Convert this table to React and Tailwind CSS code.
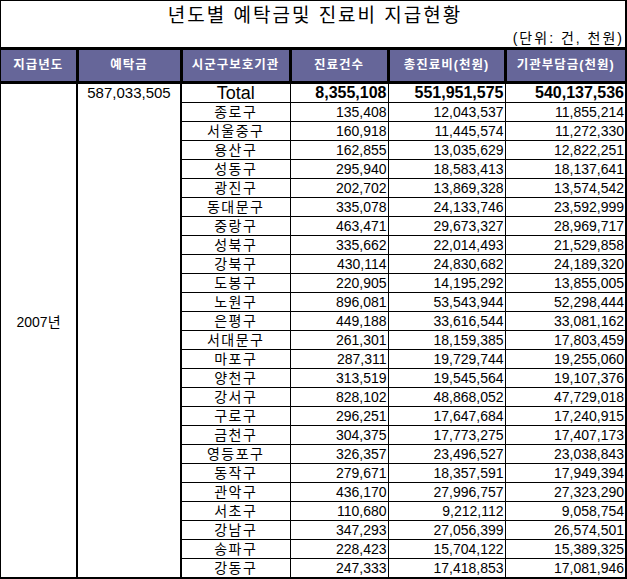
const rows = [
  ["종로구", "135,408", "12,043,537", "11,855,214"],
  ["서울중구", "160,918", "11,445,574", "11,272,330"],
  ["용산구", "162,855", "13,035,629", "12,822,251"],
  ["성동구", "295,940", "18,583,413", "18,137,641"],
  ["광진구", "202,702", "13,869,328", "13,574,542"],
  ["동대문구", "335,078", "24,133,746", "23,592,999"],
  ["중랑구", "463,471", "29,673,327", "28,969,717"],
  ["성북구", "335,662", "22,014,493", "21,529,858"],
  ["강북구", "430,114", "24,830,682", "24,189,320"],
  ["도봉구", "220,905", "14,195,292", "13,855,005"],
  ["노원구", "896,081", "53,543,944", "52,298,444"],
  ["은평구", "449,188", "33,616,544", "33,081,162"],
  ["서대문구", "261,301", "18,159,385", "17,803,459"],
  ["마포구", "287,311", "19,729,744", "19,255,060"],
  ["양천구", "313,519", "19,545,564", "19,107,376"],
  ["강서구", "828,102", "48,868,052", "47,729,018"],
  ["구로구", "296,251", "17,647,684", "17,240,915"],
  ["금천구", "304,375", "17,773,275", "17,407,173"],
  ["영등포구", "326,357", "23,496,527", "23,038,843"],
  ["동작구", "279,671", "18,357,591", "17,949,394"],
  ["관악구", "436,170", "27,996,757", "27,323,290"],
  ["서초구", "110,680", "9,212,112", "9,058,754"],
  ["강남구", "347,293", "27,056,399", "26,574,501"],
  ["송파구", "228,423", "15,704,122", "15,389,325"],
  ["강동구", "247,333", "17,418,853", "17,081,946"],
];

const headers = ["지급년도", "예탁금", "시군구보호기관", "진료건수", "총진료비(천원)", "기관부담금(천원)"];

export default function App() {
  return (
    <div className="w-[627px] h-[579px] bg-white overflow-hidden font-['Liberation_Sans','Noto_Sans_CJK_KR',sans-serif] text-black">
      <div className="w-[627px] border-l border-t border-r-2 border-black">
        {/* title */}
        <div className="h-[28px] flex items-center justify-center pl-[4px] text-[19px] tracking-[2px] leading-none">
          년도별 예탁금및 진료비 지급현황
        </div>
        <div className="h-[18px] flex items-center justify-end pr-[1px] text-[14px] tracking-[2px] leading-none">
          (단위: 건, 천원)
        </div>

        <table className="w-[624px] table-fixed border-collapse">
          <colgroup>
            <col className="w-[76px]" />
            <col className="w-[104px]" />
            <col className="w-[109px]" />
            <col className="w-[98px]" />
            <col className="w-[117px]" />
            <col className="w-[120px]" />
          </colgroup>
          <thead>
            <tr className="h-[34px] bg-[#666699]">
              {headers.map((h, i) => (
                <th
                  key={h}
                  className={`border-t-[3px] border-b-[3px] border-black text-white text-[12.5px] font-bold tracking-[1px] text-center leading-none ${
                    i < 5 ? "border-r-[3px]" : ""
                  }`}
                >
                  {h}
                </th>
              ))}
            </tr>
          </thead>
          <tbody>
            <tr className="h-[18px] leading-none">
              <td rowSpan={26} className="border-r-2 border-b-2 border-black text-center align-middle text-[14px] pb-[16px]">
                2007년
              </td>
              <td rowSpan={26} className="border-r-2 border-b-2 border-black text-center align-top text-[15px] pt-[1px]">
                587,033,505
              </td>
              <td className="border-r border-b border-black text-center text-[18px]">Total</td>
              <td className="border-r border-b border-black text-right pr-[1px] text-[16px] font-bold">8,355,108</td>
              <td className="border-r border-b border-black text-right pr-[1px] text-[16px] font-bold">551,951,575</td>
              <td className="border-b border-black text-right pr-[1px] text-[16px] font-bold">540,137,536</td>
            </tr>
            {rows.map((r, idx) => {
              const last = idx === rows.length - 1;
              const b = last ? "border-b-2" : "border-b";
              return (
                <tr key={r[0]} className="h-[19px] leading-none">
                  <td className={`border-r ${b} border-black text-center text-[14px] tracking-[1.5px]`}>{r[0]}</td>
                  <td className={`border-r ${b} border-black text-right pr-[1px] text-[14px]`}>{r[1]}</td>
                  <td className={`border-r ${b} border-black text-right pr-[1px] text-[14px]`}>{r[2]}</td>
                  <td className={`${b} border-black text-right pr-[1px] text-[14px]`}>{r[3]}</td>
                </tr>
              );
            })}
          </tbody>
        </table>
      </div>
    </div>
  );
}
